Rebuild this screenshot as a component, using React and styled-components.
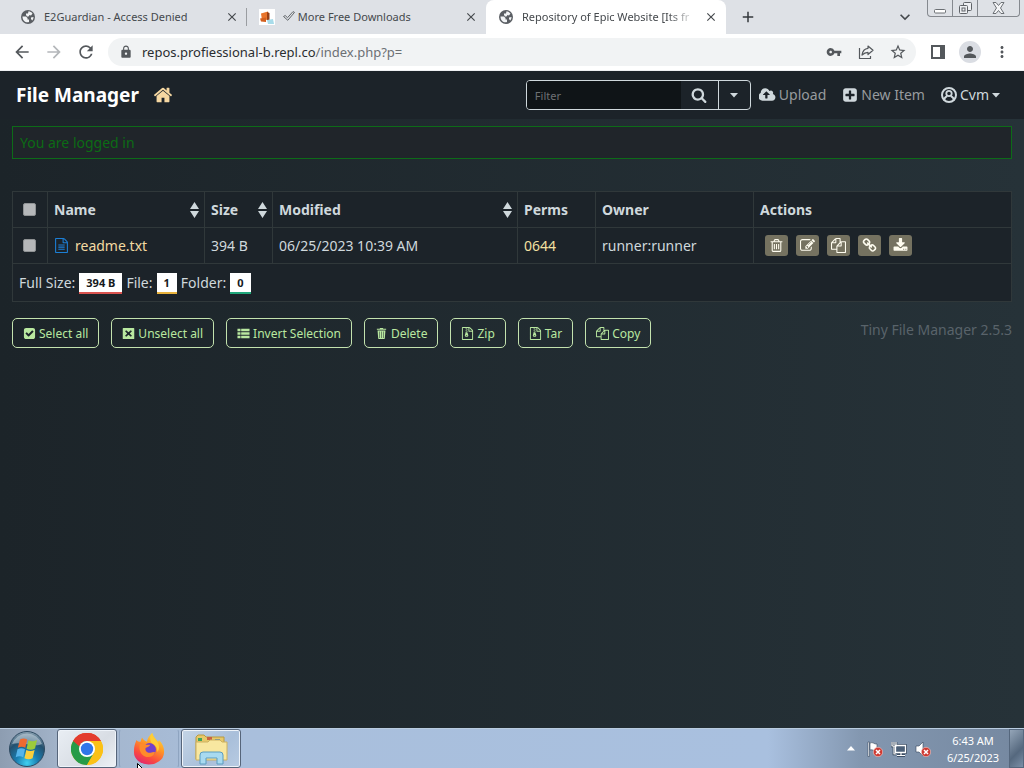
import React from "react";
import styled, { createGlobalStyle, css } from "styled-components";
import { MdArrowBack, MdArrowForward, MdRefresh, MdLock, MdVpnKey, MdStarBorder, MdPerson, MdMoreVert, MdClose, MdAdd, MdKeyboardArrowDown } from "react-icons/md";

const Global = createGlobalStyle`
  * { box-sizing: border-box; }
  body { margin: 0; font-family: "Noto Sans", "Open Sans", sans-serif; font-size: 14px; line-height: 24px; }
  button, input { font-family: inherit; }
  a { color: inherit; text-decoration: none; }
`;

const Screen = styled.div`
  min-height: 100vh;
  display: flex;
  flex-direction: column;
`;

/* ---------- browser window ---------- */

const PlainButton = styled.button`
  display: flex;
  align-items: center;
  justify-content: center;
  flex: none;
  padding: 0;
  border: 0;
  background: none;
  color: inherit;
`;

const TabStrip = styled.div`
  display: flex;
  height: 34px;
  padding-left: 8px;
  background: #dee1e6;
  color: #45494d;
`;

const TabBox = styled.div`
  flex: 0 1 ${(p) => (p.$active ? 240 : 239)}px;
  min-width: 0;
  display: flex;
  align-items: center;
  gap: 8px;
  padding: 0 8px 0 12px;
  font-size: 11px;
  ${(p) => p.$divider && css`
    background: linear-gradient(#9a9da1, #9a9da1) right center / 1px 18px no-repeat;
  `}
  ${(p) => p.$active && css`
    background: #fff;
    border-radius: 8px 8px 0 0;
  `}
`;

const TabTitle = styled.span`
  flex: 1;
  min-width: 0;
  overflow: hidden;
  white-space: nowrap;
  ${(p) => p.$fade && css`mask-image: linear-gradient(90deg, #000 84%, transparent);`}
`;

const NewTab = styled(PlainButton)`
  width: 28px;
  margin-left: 8px;
  color: #35383c;
`;

const StripEnd = styled.div`
  display: flex;
  align-items: center;
  gap: 12px;
  margin-left: auto;
  padding-right: 4px;
`;

const WindowButtons = styled.div`
  display: flex;
  align-self: flex-start;
  height: 17px;
  border: 1px solid #85898f;
  border-top: 0;
  border-radius: 0 0 4px 4px;
`;

const WindowButton = styled(PlainButton)`
  width: ${(p) => (p.$wide ? 41 : 25)}px;
  border-right: ${(p) => (p.$wide ? 0 : "1px solid #85898f")};
`;

const Toolbar = styled.div`
  display: flex;
  align-items: center;
  height: 37px;
  padding: 0 8px;
  background: #fff;
  border-bottom: 1px solid #eef0f2;
  color: #54585c;
`;

const ToolButton = styled(PlainButton)`
  width: 28px;
  height: 28px;
  margin-right: 4px;
  color: ${(p) => (p.$muted ? "#b4b7ba" : "inherit")};
  &:last-child { margin-right: 0; }
`;

const Omnibox = styled.div`
  flex: 1;
  display: flex;
  align-items: center;
  height: 28px;
  margin: 0 8px 0 4px;
  padding: 0 4px 0 11px;
  border-radius: 14px;
  background: #f1f3f4;
`;

const Address = styled.a`
  flex: 1;
  margin-left: 9px;
  font-size: 13px;
  color: #2a2d30;
  span { color: #6c7074; }
`;

const Avatar = styled.span`
  display: flex;
  align-items: center;
  justify-content: center;
  width: 22px;
  height: 22px;
  border-radius: 50%;
  background: #dadde3;
`;

/* ---------- file manager ---------- */

const Page = styled.main`
  flex: 1;
  background: linear-gradient(90deg, #1c2429, #263238);
  color: #cfd8dc;
`;

const NavBar = styled.nav`
  display: flex;
  align-items: center;
  height: 48px;
  padding: 0 24px 0 16px;
  background: #1c2329;
  color: #979b9e;
`;

const Brand = styled.a`
  font-size: 19px;
  font-weight: 700;
  color: #fff;
`;

const HomeLink = styled.a`
  display: flex;
  margin: 0 auto 0 14px;
  color: #f6d8a2;
`;

const FilterGroup = styled.form`
  display: flex;
  width: 225px;
  height: 30px;
  border: 1px solid #cfd8dc;
  border-radius: 4px;
  overflow: hidden;
  color: #cfd8dc;
`;

const FilterInput = styled.input`
  flex: 1;
  min-width: 0;
  padding: 0 8px;
  border: 0;
  background: #0f1417;
  font-size: 11px;
  &::placeholder { color: #6d7174; opacity: 1; }
`;

const FilterButton = styled(PlainButton)`
  width: ${(p) => (p.$menu ? 32 : 37)}px;
  border-left: ${(p) => (p.$menu ? "1px solid #cfd8dc" : 0)};
`;

const NavLinks = styled.div`
  display: flex;
  gap: 16px;
  margin-left: 8px;
`;

const NavLink = styled.a`
  display: flex;
  align-items: center;
  gap: 3px;
  svg { color: #cfd8dc; }
  color: ${(p) => (p.$user ? "#cfd8dc" : "inherit")};
`;

const Content = styled.div`
  padding: 7px 12px;
`;

const Alert = styled.p`
  margin: 0 0 32px;
  padding: 4px 7px;
  height: 33px;
  border: 1px solid #0d6b18;
  background: #20252a;
  color: #0c6b15;
`;

const FileTable = styled.table`
  width: 100%;
  table-layout: fixed;
  border-collapse: collapse;
  background: #1c2329;
  th, td {
    height: 36px;
    padding: 0 7px 0 6px;
    border: 1px solid #30383a;
    text-align: left;
    white-space: nowrap;
  }
  th:first-child, tbody td:first-child { padding: 0 0 0 10px; }
  th { padding-right: 5px; }
  tfoot td { height: 38px; }
`;

const Col = styled.col`
  width: ${(p) => (p.$w ? p.$w + "px" : "auto")};
`;

const Tick = styled.input`
  appearance: none;
  display: block;
  width: 13px;
  height: 13px;
  margin: 0;
  border: 1px solid #8f9294;
  border-radius: 2px;
  background: #b5b7b9;
`;

const HeadCell = styled.div`
  display: flex;
  align-items: center;
  justify-content: space-between;
`;

const FileLink = styled.a`
  display: flex;
  align-items: center;
  gap: 6px;
  color: #f3daa2;
  svg { color: #1c7fd6; }
`;

const PermLink = styled.a`
  color: #f3e0a0;
`;

const Actions = styled.div`
  display: flex;
  gap: 8px;
  padding-left: 5px;
`;

const ActionLink = styled.a`
  display: flex;
  align-items: center;
  justify-content: center;
  width: 23px;
  height: 21px;
  border-radius: 3px;
  background: #757260;
  color: #fffdf0;
`;

const Summary = styled.div`
  display: flex;
  align-items: center;
  gap: 4px;
`;

const Badge = styled.span`
  height: 21px;
  padding: 0 7px;
  border-bottom: 2px solid ${(p) => p.$line};
  background: #fff;
  color: #16191c;
  font-size: 11px;
  font-weight: 700;
  line-height: 19px;
  margin-top: 2px;
`;

const Footer = styled.footer`
  display: flex;
  flex-wrap: wrap;
  justify-content: space-between;
  margin-top: 16px;
  color: #59636a;
`;

const BulkButtons = styled.div`
  display: flex;
  flex-wrap: wrap;
  gap: 12px;
`;

const BulkButton = styled.button`
  display: flex;
  align-items: center;
  gap: 3px;
  height: 30px;
  padding: 0 10px;
  border: 1px solid #c3e2ae;
  border-radius: 5px;
  background: transparent;
  color: #b9e8a0;
  font-size: 12px;
`;

/* ---------- task bar ---------- */

const TaskBar = styled.div`
  display: flex;
  align-items: center;
  gap: 2px;
  height: 40px;
  padding-left: 8px;
  border-top: 1px solid #b9cce0;
  background: linear-gradient(90deg, #8d9db1 0, #a3b4ca 60px, #a9bfdc 240px, #a9c0df 75%, #8397b0 84%, #7588a0 100%);
`;

const StartButton = styled(PlainButton)`
  width: 38px;
  margin-right: 9px;
`;

const TaskButton = styled(PlainButton)`
  width: 60px;
  height: 39px;
  border-radius: 3px;
  border: 1px solid ${(p) => (p.$open ? "#56657a" : "transparent")};
  ${(p) => p.$idle && css`
    border-left-color: #8ea4c0;
    border-right-color: #8ea4c0;
  `}
  ${(p) => p.$open && css`
    box-shadow: inset 0 0 0 1px #eef3f9;
    background: ${p.$current ? "linear-gradient(135deg, #e9eef4, #d8dde4 60%, #eef2f6)" : "linear-gradient(135deg, #c4d4e5, #a9bfda 60%, #b8cbe2)"};
  `}
`;

const Tray = styled.div`
  display: flex;
  align-items: center;
  align-self: stretch;
  gap: 8px;
  margin-left: auto;
  color: #fff;
`;

const TrayToggle = styled(PlainButton)`
  width: 8px;
  margin-right: 4px;
`;

const Clock = styled.time`
  width: 56px;
  margin-left: 6px;
  font-size: 11px;
  line-height: 17px;
  text-align: center;
`;

const ShowDesktop = styled(PlainButton)`
  align-self: stretch;
  width: 15px;
  border: 1px solid #55677d;
  background: linear-gradient(135deg, #94a5b8, #55687e 60%, #7b8fa7);
`;

const Pointer = styled.svg`
  position: absolute;
  left: 137px;
  bottom: -14px;
`;

const PointerLayer = styled.div`
  position: fixed;
  inset: 0;
  overflow: hidden;
  pointer-events: none;
`;

/* ---------- icons ---------- */

const FILE_OUTLINE = "M1596 380q28 28 48 76t20 88v1152q0 40-28 68t-68 28h-1344q-40 0-68-28t-28-68v-1600q0-40 28-68t68-28h896q40 0 88 20t76 48zm-444-244v376h376q-10-29-22-41l-313-313q-12-12-41-22zm384 1528v-1024h-416q-40 0-68-28t-28-68v-416h-768v1536h1280z";

const PATHS = {
  home: "M1472 992v480q0 26-19 45t-45 19h-384v-384h-256v384h-384q-26 0-45-19t-19-45v-480q0-1 .5-3t.5-3l575-474 575 474q1 2 1 6zm223-69l-62 74q-8 9-21 11h-3q-13 0-21-7l-692-577-692 577q-12 8-24 7-13-2-21-11l-62-74q-8-10-7-23.5t11-21.5l719-599q32-26 76-26t76 26l244 204v-195q0-14 9-23t23-9h192q14 0 23 9t9 23v408l219 182q10 8 11 21.5t-7 23.5z",
  search: "M1216 832q0-185-131.5-316.5t-316.5-131.5-316.5 131.5-131.5 316.5 131.5 316.5 316.5 131.5 316.5-131.5 131.5-316.5zm512 832q0 52-38 90t-90 38q-54 0-90-38l-343-342q-179 124-399 124-143 0-273.5-55.5t-225-150-150-225-55.5-273.5 55.5-273.5 150-225 225-150 273.5-55.5 273.5 55.5 225 150 150 225 55.5 273.5q0 220-124 399l343 343q37 37 37 90z",
  upload: "M1216 864q0-14-9-23l-352-352q-9-9-23-9t-23 9l-351 351q-10 12-10 24 0 14 9 23t23 9h224v352q0 13 9.500 22.500t22.500 9.500h192q13 0 22.500-9.500t9.500-22.500v-352h224q13 0 22.500-9.500t9.500-22.500zm640 288q0 159-112.500 271.500t-271.500 112.500h-1088q-185 0-316.500-131.500t-131.500-316.500q0-130 70-240t188-165q-2-30-2-43 0-212 150-362t362-150q156 0 285.500 87t188.500 231q71-62 166-62 106 0 181 75t75 181q0 76-41 138 130 31 213.500 135.500t83.500 238.500z",
  plus: "M1408 960v-128q0-26-19-45t-45-19h-320v-320q0-26-19-45t-45-19h-128q-26 0-45 19t-19 45v320h-320q-26 0-45 19t-19 45v128q0 26 19 45t45 19h320v320q0 26 19 45t45 19h128q26 0 45-19t19-45v-320h320q26 0 45-19t19-45zm256-544v960q0 119-84.5 203.5t-203.5 84.5h-960q-119 0-203.5-84.5t-84.5-203.500v-960q0-119 84.5-203.5t203.5-84.5h960q119 0 203.5 84.5t84.5 203.500z",
  check: "M813 1299l614-614q19-19 19-45t-19-45l-102-102q-19-19-45-19t-45 19l-467 467-211-211q-19-19-45-19t-45 19l-102 102q-19 19-19 45t19 45l358 358q19 19 45 19t45-19zm851-883v960q0 119-84.5 203.5t-203.5 84.5h-960q-119 0-203.5-84.5t-84.5-203.5v-960q0-119 84.5-203.5t203.5-84.5h960q119 0 203.5 84.5t84.5 203.5z",
  text: FILE_OUTLINE + "m-1024-864q0-14 9-23t23-9h704q14 0 23 9t9 23v64q0 14-9 23t-23 9h-704q-14 0-23-9t-9-23v-64zm736 224q14 0 23 9t9 23v64q0 14-9 23t-23 9h-704q-14 0-23-9t-9-23v-64q0-14 9-23t23-9h704zm0 256q14 0 23 9t9 23v64q0 14-9 23t-23 9h-704q-14 0-23-9t-9-23v-64q0-14 9-23t23-9h704z",
  archive: FILE_OUTLINE + "M640 128h128v128h-128zM768 256h128v128h-128zM640 384h128v128h-128zM768 512h128v128h-128zM640 640h128v128h-128zM640 768h256l110 366q20 70-30 138t-208 72-208-72-30-138zM768 1088a128 64 0 1 0 0 128a128 64 0 1 0 0-128z",
  close: "M192 128h1408q90 0 90 90v1356q0 90-90 90h-1408q-90 0-90-90v-1356q0-90 90-90zM580 440l-160 160 296 296-296 296 160 160 316-276 316 276 160-160-296-296 296-296-160-160-316 276z",
  list: "M64 256h420v340h-420zM576 256h1152v340h-1152zM64 736h420v340h-420zM576 736h1152v340h-1152zM64 1216h420v340h-420zM576 1216h1152v340h-1152z",
  trash: "M256 256h384l64-128h384l64 128h384v128h-1280zM352 480h1088l-90 1120q-10 64-74 64h-760q-64 0-74-64zM600 620v900h70v-900zM860 620v900h70v-900zM1120 620v900h70v-900z",
  trashO: "M704 736v576q0 14-9 23t-23 9h-64q-14 0-23-9t-9-23v-576q0-14 9-23t23-9h64q14 0 23 9t9 23zm256 0v576q0 14-9 23t-23 9h-64q-14 0-23-9t-9-23v-576q0-14 9-23t23-9h64q14 0 23 9t9 23zm256 0v576q0 14-9 23t-23 9h-64q-14 0-23-9t-9-23v-576q0-14 9-23t23-9h64q14 0 23 9t9 23zm128 724v-948h-896v948q0 22 7 40.5t14.5 27 10.5 8.5h832q3 0 10.5-8.5t14.5-27 7-40.5zm-672-1076h448l-48-117q-7-9-17-11h-317q-10 2-17 11zm928 32v64q0 14-9 23t-23 9h-96v948q0 83-47 143.5t-113 60.5h-832q-66 0-113-58.5t-47-141.5v-952h-96q-14 0-23-9t-9-23v-64q0-14 9-23t23-9h309l70-167q15-37 54-63t79-26h320q40 0 79 26t54 63l70 167h309q14 0 23 9t9 23z",
  edit: "M888 1184l116-116-152-152-116 116v56h96v96h56zm440-720q-16-16-33 1l-350 350q-17 17-1 33t33-1l350-350q17-17 1-33zm80 594v190q0 119-84.5 203.5t-203.5 84.5h-832q-119 0-203.5-84.5t-84.5-203.5v-832q0-119 84.5-203.5t203.5-84.5h832q63 0 117 25 15 7 18 23 3 17-9 29l-49 49q-14 14-32 8-23-6-45-6h-832q-66 0-113 47t-47 113v832q0 66 47 113t113 47h832q66 0 113-47t47-113v-126q0-13 9-22l64-64q15-15 35-7t20 29zm-96-738l288 288-672 672h-288v-288zm444 132l-92 92-288-288 92-92q28-28 68-28t68 28l152 152q28 28 28 68t-28 68z",
  copy: "M1696 384q40 0 68 28t28 68v1216q0 40-28 68t-68 28h-960q-40 0-68-28t-28-68v-288h-544q-40 0-68-28t-28-68v-672q0-40 20-88t48-76l408-408q28-28 76-48t88-20h416q40 0 68 28t28 68v328q68-40 128-40h416zm-544 213l-299 299h299v-299zm-640-384l-299 299h299v-299zm196 647l316-316v-416h-384v416q0 40-28 68t-68 28h-416v640h512v-256q0-40 20-88t48-76zm956 804v-1152h-384v416q0 40-28 68t-68 28h-416v640h896z",
  link: "M1520 1216q0-40-28-68l-208-208q-28-28-68-28-42 0-72 32 3 3 19 18.5t21.5 21.5 15 19 13 25.5 3.5 27.5q0 40-28 68t-68 28q-15 0-27.5-3.5t-25.5-13-19-15-21.5-21.5-18.5-19q-33 31-33 73 0 40 28 68l206 207q27 27 68 27 40 0 68-26l147-146q28-28 28-67zm-703-705q0-40-28-68l-206-207q-28-28-68-28-39 0-68 27l-147 146q-28 28-28 67 0 40 28 68l208 208q27 27 68 27 42 0 72-31-3-3-19-18.5t-21.5-21.5-15-19-13-25.5-3.5-27.5q0-40 28-68t68-28q15 0 27.5 3.5t25.5 13 19 15 21.5 21.500 18.500 19q33-31 33-73zm895 705q0 120-85 203l-147 146q-83 83-203 83-121 0-204-85l-206-207q-83-83-83-203 0-123 88-209l-88-88q-86 88-208 88-120 0-204-84l-208-208q-84-84-84-204t85-203l147-146q83-83 203-83 121 0 204 85l206 207q83 83 83 203 0 123-88 209l88 88q86-88 208-88 120 0 204 84l208 208q84 84 84 204z",
  download: "M1344 1344q0-26-19-45t-45-19-45 19-19 45 19 45 45 19 45-19 19-45zm256 0q0-26-19-45t-45-19-45 19-19 45 19 45 45 19 45-19 19-45zm128-224v320q0 40-28 68t-68 28h-1472q-40 0-68-28t-28-68v-320q0-40 28-68t68-28h465l135 136q58 56 136 56t136-56l136-136h464q40 0 68 28t28 68zm-325-569q17 41-14 70l-448 448q-18 19-45 19t-45-19l-448-448q-31-29-14-70 17-39 59-39h256v-448q0-26 19-45t45-19h256q26 0 45 19t19 45v448h256q42 0 59 39z",
};

const Icon = ({ name, size = 14, wide }) => (
  <svg width={wide || size} height={size} viewBox={name === "upload" ? "0 0 1920 1792" : "0 0 1792 1792"} fill="currentColor" fillRule="evenodd" aria-hidden="true">
    <path d={PATHS[name]} />
  </svg>
);

const GlobeIcon = () => (
  <svg width="16" height="16" viewBox="0 0 16 16" aria-hidden="true">
    <circle cx="8" cy="8" r="7" fill="#5a5e63" />
    <path d="M2.500 7.500h3.500l1.500 1.500v1.500H9v2.500c-3 1-6.500-1-6.500-5.500zM8.500 2.300c1.500.2 3 .9 4 2.200L11 6.500 9.500 6l-1 1.500H7L6 6V4.500h2zM13.500 8c0 1.500-.5 2.500-1.300 3.500L11 10V8.500z" fill="#f1f3f5" />
  </svg>
);

const UserIcon = () => (
  <svg width="16" height="16" viewBox="0 0 16 16" fill="none" stroke="currentColor" aria-hidden="true">
    <circle cx="8" cy="8" r="7" strokeWidth="2" />
    <circle cx="8" cy="6.500" r="2.700" strokeWidth="1.800" />
    <path d="M3 13.300c.4-2.300 1.600-3.700 3.200-4.200M13 13.300c-.4-2.300-1.600-3.700-3.200-4.200" strokeWidth="2" />
  </svg>
);

const Caret = () => (
  <svg width="8" height="5" viewBox="0 0 8 5" fill="currentColor" aria-hidden="true"><path d="M0 0h8L4 4.500z" /></svg>
);

const SortIcon = () => (
  <svg width="9" height="16" viewBox="0 0 9 16" fill="currentColor" aria-hidden="true"><path d="M4.500 0L9 7H0zM4.500 16L9 9H0z" /></svg>
);

const ShareIcon = () => (
  <svg width="16" height="16" viewBox="0 0 16 16" fill="none" stroke="currentColor" strokeWidth="1.200" strokeLinejoin="round" aria-hidden="true">
    <path d="M1.500 4v10.500h11V12M10 2l5 4.300-5 4.200V8.300C7.500 8.300 6 9 4 11c.5-3.500 2.500-6.300 6-6.700z" />
  </svg>
);

const PanelIcon = () => (
  <svg width="14" height="14" viewBox="0 0 14 14" fill="currentColor" fillRule="evenodd" aria-hidden="true"><path d="M0 0h14v14H0zM2 2v10h7V2z" /></svg>
);

const DownloadsSiteIcon = () => (
  <svg width="16" height="16" viewBox="0 0 16 16" aria-hidden="true">
    <path fill="#fff" d="M0 0h16v16H0z" />
    <path fill="#e8742a" d="M2 4.500l7-2 1 8-7 1z" />
    <path fill="#963f16" d="M8 3l2.500 1v7.500L8 11z" />
    <path fill="#d35f1e" d="M1 9.500l6-1V13l-5-.5z" />
    <path fill="#a8dcea" d="M8 11l6-1 1 5H9z" />
  </svg>
);

const CheckMark = () => (
  <svg width="12" height="10" viewBox="0 0 12 10" fill="none" stroke="#64686c" strokeWidth="1" strokeLinejoin="round" aria-hidden="true">
    <path d="M.5 5.500l1.700-1L4.500 6.700 10 .6l1.500.8L4.800 9.300z" />
  </svg>
);

const MinimizeGlyph = () => (
  <svg width="12" height="15" viewBox="0 0 12 15" fill="#fff" stroke="#6c7075" aria-hidden="true"><rect x=".5" y="8.500" width="11" height="3.500" rx="1" /></svg>
);

const RestoreGlyph = () => (
  <svg width="13" height="13" viewBox="0 0 13 13" fill="#eef0f3" stroke="#5f6368" aria-hidden="true">
    <rect x="4.500" y=".5" width="8" height="8" rx="1" /><rect x=".5" y="3.500" width="8" height="8" rx="1" /><rect x="3" y="6" width="3" height="3" />
  </svg>
);

const CloseGlyph = () => (
  <svg width="13" height="12" viewBox="0 0 13 12" fill="#f4f5f7" stroke="#6c7075" aria-hidden="true">
    <path d="M1 .5h3l2.500 3 2.500-3h3L8.500 6l3.500 5.500H9l-2.500-3-2.500 3H1L4.500 6z" />
  </svg>
);

const StartOrb = () => (
  <svg width="38" height="38" viewBox="0 0 38 38" aria-hidden="true">
    <defs>
      <radialGradient id="orb" cx=".5" cy=".9" r=".9">
        <stop offset="0" stopColor="#3fd0f0" /><stop offset=".35" stopColor="#1a7db0" /><stop offset=".7" stopColor="#24516f" /><stop offset="1" stopColor="#8fa5b5" />
      </radialGradient>
    </defs>
    <circle cx="19" cy="19" r="17.500" fill="url(#orb)" stroke="#2e4a61" />
    <path d="M4 14a16 16 0 0 1 30 0c-8 4-20-3-30 0z" fill="#d5e0e8" opacity=".5" />
    <path d="M12 9.500c2.500-1.500 4.700-1.300 7.200 0l-1.900 8.300c-2.500-1.300-5-1.300-7.500 0z" fill="#ee6a31" />
    <path d="M20.500 10.300c2.500 1.400 5.500 1.400 8.500-.3l-2 8.600c-2.800 1.600-5.700 1.500-8.400.1z" fill="#9ccb3c" />
    <path d="M9.500 19.200c2.500-1.400 5-1.400 7.500 0l-1.800 8c-2.400-1.400-4.900-1.400-7.500 0z" fill="#55b4ea" />
    <path d="M18.300 20c2.700 1.400 5.500 1.400 8.300 0l-2 8.300c-2.500 1.400-5.400 1.300-8.200-.1z" fill="#fbcf3c" />
  </svg>
);

const ChromeLogo = () => (
  <svg width="32" height="32" viewBox="0 0 32 32" aria-hidden="true">
    <circle cx="16" cy="16" r="16" fill="#fbc116" />
    <path d="M16 16L2.140 8A16 16 0 0 1 29.860 8z" fill="#e33b2e" />
    <path d="M16 16L2.140 8A16 16 0 0 0 16 32l7-12z" fill="#269b48" />
    <path d="M16 8h13.860A16 16 0 0 1 16 32l7-12z" fill="#fbc116" />
    <path d="M9 20L2.140 8 16 8z" fill="#269b48" />
    <path d="M2.140 8A16 16 0 0 1 29.860 8H16a8 8 0 0 0-7.500 5.500z" fill="#e33b2e" />
    <circle cx="16" cy="16" r="8" fill="#fff" />
    <circle cx="16" cy="16" r="6.200" fill="#2f76e8" />
  </svg>
);

const FirefoxLogo = () => (
  <svg width="32" height="32" viewBox="0 0 32 32" aria-hidden="true">
    <defs>
      <linearGradient id="fox" x1=".8" y1="0" x2=".3" y2="1">
        <stop offset="0" stopColor="#ffe23f" /><stop offset=".4" stopColor="#ff9a26" /><stop offset=".75" stopColor="#fb4b3f" /><stop offset="1" stopColor="#e2286f" />
      </linearGradient>
    </defs>
    <path d="M3.500 7C4.500 9 6 8.500 7.500 8.700L9 4.500c1 2 2.500 3.200 5 4.200C14.500 5 16.500 2 19.500 0c.5 4 3.500 5.500 5.500 9l1-2c4 4 5.500 8.500 5 13a15 12 0 0 1-30-1C.800 14 2 10.500 3.500 7z" fill="url(#fox)" />
    <circle cx="16.500" cy="16.500" r="6.500" fill="#7341c9" />
    <path d="M7 11c3-1.500 5-.5 6 .7h4c0 2-3.500 2.300-4.500 3.500-.5 3 2 5 5 4.500 2-.3 3.500-1 4.500-.3-1.500 4-6 5.500-10 4C7 21.500 5.500 15 7 11z" fill="#ff8b2b" />
    <path d="M19 0c.5 4 3.500 5.500 5.500 9 2 3.500 2 7 0 10 0-5-3-7.500-6-9C16.500 6 17 2.500 19 0z" fill="#ffce35" />
  </svg>
);

const ExplorerIcon = () => (
  <svg width="34" height="32" viewBox="0 0 34 32" aria-hidden="true">
    <path d="M2 4l2-2h6l2 2h18v22H2z" fill="#e7c96a" stroke="#b99a3e" />
    <path d="M4 5h4v3H4z" fill="#3fa45c" /><path d="M13 4h5v3h-5z" fill="#c9613f" /><path d="M21 6h5v3h-5z" fill="#4f87b8" />
    <path d="M2 9h12l2-2h10l2 2h5v18H2z" fill="#f8e7a0" stroke="#ccb060" />
    <path d="M6 31V22q0-3 3-3h17q3 0 3 3v9h-6v-6H12v6z" fill="#a8daf0" stroke="#5a9cc0" />
  </svg>
);

const ErrorDot = ({ x }) => (
  <g transform={`translate(${x} 11)`}>
    <circle r="4.700" fill="#cf3a32" stroke="#f4d0cc" strokeWidth=".6" />
    <path d="M-2-2l4 4M2-2l-4 4" stroke="#fff" strokeWidth="1.500" />
  </g>
);

const FlagIcon = () => (
  <svg width="16" height="16" viewBox="0 0 16 16" aria-hidden="true">
    <path d="M1 1h1.500v14.500H1z" fill="#fff" stroke="#33445a" strokeWidth=".6" />
    <path d="M3 2c3-1.500 4 1.500 7 1v7c-3 .5-4-2-7-1z" fill="#fff" stroke="#33445a" strokeWidth=".6" /><ErrorDot x={11} />
  </svg>
);

const NetworkIcon = () => (
  <svg width="16" height="16" viewBox="0 0 16 16" fill="none" aria-hidden="true">
    <path d="M4.500 4.500h10v7h-10zM6 14.500h8M10 12v2M1 1v4h4V1M3 1v3M3 5v8h2" stroke="#27384d" strokeWidth="2.600" />
    <path d="M4.500 4.500h10v7h-10z" fill="#4c6078" stroke="#fff" strokeWidth="1.300" />
    <path d="M6 14.500h8M10 12v2M1 1v4h4V1M3 1v3M3 5v8h2" stroke="#fff" strokeWidth="1.200" />
  </svg>
);

const SpeakerIcon = () => (
  <svg width="16" height="16" viewBox="0 0 16 16" aria-hidden="true">
    <path d="M1 5h3l4-4v14l-4-4H1z" fill="#fff" stroke="#33445a" strokeWidth=".6" /><ErrorDot x={11} />
  </svg>
);

/* ---------- parts ---------- */

const Tab = ({ icon, title, active, divider, fade }) => (
  <TabBox $active={active} $divider={divider}>
    {icon}
    <TabTitle $fade={fade}>{title}</TabTitle>
    <PlainButton aria-label="Close tab"><MdClose size={14} /></PlainButton>
  </TabBox>
);

const COLUMNS = [["Name", true], ["Size", true], ["Modified", true], ["Perms"], ["Owner"], ["Actions"]];
const ACTIONS = [["trashO", "Delete"], ["edit", "Rename"], ["copy", "Copy to"], ["link", "Direct link"], ["download", "Download"]];
const BULK = [["check", "Select all"], ["close", "Unselect all"], ["list", "Invert Selection"], ["trash", "Delete"], ["archive", "Zip"], ["archive", "Tar"], ["copy", "Copy"]];

export default function App() {
  return (
    <Screen>
      <Global />
      <TabStrip>
        <Tab icon={<GlobeIcon />} title="E2Guardian - Access Denied" divider />
        <Tab icon={<DownloadsSiteIcon />} title={<><CheckMark /> More Free Downloads</>} />
        <Tab icon={<GlobeIcon />} title="Repository of Epic Website [Its fr" active fade />
        <NewTab aria-label="New tab"><MdAdd size={18} /></NewTab>
        <StripEnd>
          <PlainButton aria-label="Search tabs"><MdKeyboardArrowDown size={20} /></PlainButton>
          <WindowButtons>
            <WindowButton aria-label="Minimize"><MinimizeGlyph /></WindowButton>
            <WindowButton aria-label="Restore"><RestoreGlyph /></WindowButton>
            <WindowButton $wide aria-label="Close"><CloseGlyph /></WindowButton>
          </WindowButtons>
        </StripEnd>
      </TabStrip>
      <Toolbar>
        <ToolButton aria-label="Back"><MdArrowBack size={20} /></ToolButton>
        <ToolButton $muted aria-label="Forward"><MdArrowForward size={20} /></ToolButton>
        <ToolButton aria-label="Reload"><MdRefresh size={20} /></ToolButton>
        <Omnibox>
          <MdLock size={14} />
          <Address href="#">repos.profiessional-b.repl.co<span>/index.php?p=</span></Address>
          <ToolButton aria-label="Passwords"><MdVpnKey size={16} /></ToolButton>
          <ToolButton aria-label="Share"><ShareIcon /></ToolButton>
          <ToolButton aria-label="Bookmark"><MdStarBorder size={18} /></ToolButton>
        </Omnibox>
        <ToolButton aria-label="Side panel"><PanelIcon /></ToolButton>
        <ToolButton aria-label="Profile"><Avatar><MdPerson size={18} /></Avatar></ToolButton>
        <ToolButton aria-label="Menu"><MdMoreVert size={18} /></ToolButton>
      </Toolbar>

      <Page>
        <NavBar>
          <Brand href="#">File Manager</Brand>
          <HomeLink href="#" aria-label="Home"><Icon name="home" size={20} /></HomeLink>
          <FilterGroup>
            <FilterInput placeholder="Filter" aria-label="Filter" />
            <FilterButton type="button" aria-label="Search"><Icon name="search" size={16} /></FilterButton>
            <FilterButton type="button" $menu aria-label="Search options"><Caret /></FilterButton>
          </FilterGroup>
          <NavLinks>
            <NavLink href="#"><Icon name="upload" size={16} wide={17} />Upload</NavLink>
            <NavLink href="#"><Icon name="plus" size={16} />New Item</NavLink>
            <NavLink href="#" $user><UserIcon />Cvm <Caret /></NavLink>
          </NavLinks>
        </NavBar>
        <Content>
          <Alert role="status">You are logged in</Alert>
          <FileTable>
            <colgroup>{[35, 157, 68, 245, 78, 158, 0].map((w, i) => <Col key={i} $w={w} />)}</colgroup>
            <thead>
              <tr>
                <th><Tick type="checkbox" aria-label="Select all files" /></th>
                {COLUMNS.map(([label, sortable]) => (
                  <th key={label}><HeadCell>{label}{sortable && <SortIcon />}</HeadCell></th>
                ))}
              </tr>
            </thead>
            <tbody>
              <tr>
                <td><Tick type="checkbox" aria-label="Select readme.txt" /></td>
                <td><FileLink href="#"><Icon name="text" size={15} />readme.txt</FileLink></td>
                <td>394 B</td>
                <td>06/25/2023 10:39 AM</td>
                <td><PermLink href="#">0644</PermLink></td>
                <td>runner:runner</td>
                <td>
                  <Actions>
                    {ACTIONS.map(([name, label]) => <ActionLink key={name} href="#" aria-label={label}><Icon name={name} size={15} /></ActionLink>)}
                  </Actions>
                </td>
              </tr>
            </tbody>
            <tfoot>
              <tr>
                <td colSpan={7}>
                  <Summary>
                    Full Size: <Badge $line="#d9534f">394 B</Badge> File: <Badge $line="#e8b23c">1</Badge> Folder: <Badge $line="#1fa67a">0</Badge>
                  </Summary>
                </td>
              </tr>
            </tfoot>
          </FileTable>
          <Footer>
            <BulkButtons>
              {BULK.map(([icon, label]) => <BulkButton key={label}><Icon name={icon} size={13} />{label}</BulkButton>)}
            </BulkButtons>
            <a href="#">Tiny File Manager 2.5.3</a>
          </Footer>
        </Content>
      </Page>

      <TaskBar>
        <StartButton aria-label="Start"><StartOrb /></StartButton>
        <TaskButton $open $current aria-label="Google Chrome"><ChromeLogo /></TaskButton>
        <TaskButton $idle aria-label="Firefox"><FirefoxLogo /></TaskButton>
        <TaskButton $open aria-label="Windows Explorer"><ExplorerIcon /></TaskButton>
        <Tray>
          <TrayToggle aria-label="Show hidden icons">
            <svg width="8" height="5" viewBox="0 0 8 5" fill="#fff" aria-hidden="true"><path d="M4 0l4 4.500H0z" /></svg>
          </TrayToggle>
          <FlagIcon />
          <NetworkIcon />
          <SpeakerIcon />
          <Clock>6:43 AM<br />6/25/2023</Clock>
          <ShowDesktop aria-label="Show desktop" />
        </Tray>
      </TaskBar>
      <PointerLayer>
        <Pointer width="12" height="19" viewBox="0 0 12 19" fill="#fff" stroke="#000" aria-hidden="true"><path d="M.5.500v16l4-4 2.500 6 2-1-2.500-5.500H12z" /></Pointer>
      </PointerLayer>
    </Screen>
  );
}
